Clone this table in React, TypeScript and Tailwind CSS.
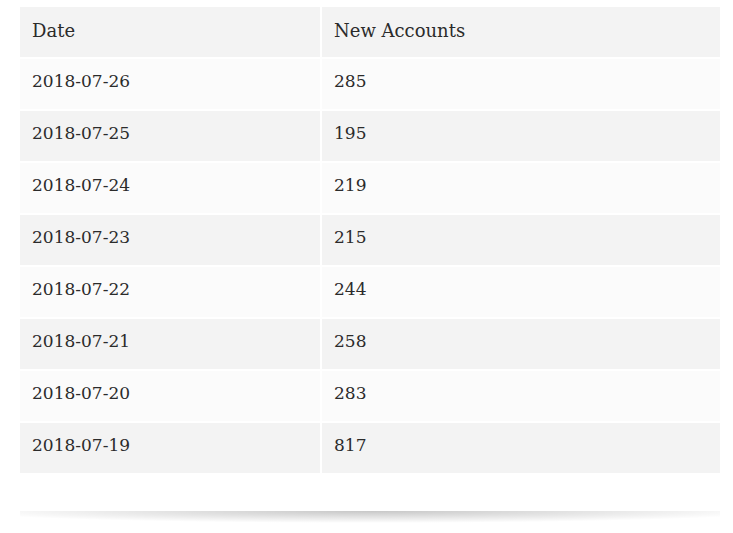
import React from "react";

const rows: [string, string][] = [
  ["2018-07-26", "285"],
  ["2018-07-25", "195"],
  ["2018-07-24", "219"],
  ["2018-07-23", "215"],
  ["2018-07-22", "244"],
  ["2018-07-21", "258"],
  ["2018-07-20", "283"],
  ["2018-07-19", "817"],
];

export default function App() {
  return (
    <div
      className="w-[733px] h-[533px] bg-white text-[#2b2b2b] text-[17px]"
      style={{ fontFamily: '"DejaVu Serif", serif' }}
    >
      <div className="pt-[5px] pl-[18px] w-[704px]">
        <table className="w-[704px] border-separate border-spacing-[2px] table-fixed">
          <colgroup>
            <col className="w-[300px]" />
            <col />
          </colgroup>
          <thead>
            <tr>
              <th className="h-[50px] bg-[#f3f3f3] text-left font-normal pl-3 pb-[4px] align-middle text-[18px]">Date</th>
              <th className="h-[50px] bg-[#f3f3f3] text-left font-normal pl-3 pb-[4px] align-middle text-[18px]">New Accounts</th>
            </tr>
          </thead>
          <tbody>
            {rows.map(([d, n], i) => (
              <tr key={d} className={i % 2 === 0 ? "bg-[#fbfbfb]" : "bg-[#f3f3f3]"}>
                <td className="h-[50px] pl-3 pb-[4px] align-middle">{d}</td>
                <td className="h-[50px] pl-3 pb-[4px] align-middle">{n}</td>
              </tr>
            ))}
          </tbody>
        </table>
      </div>
      <div className="mt-[36px] ml-[20px] w-[700px] h-[12px] bg-[radial-gradient(ellipse_58%_100%_at_50%_0%,rgba(0,0,0,0.22),rgba(0,0,0,0)_100%)]" />
    </div>
  );
}
